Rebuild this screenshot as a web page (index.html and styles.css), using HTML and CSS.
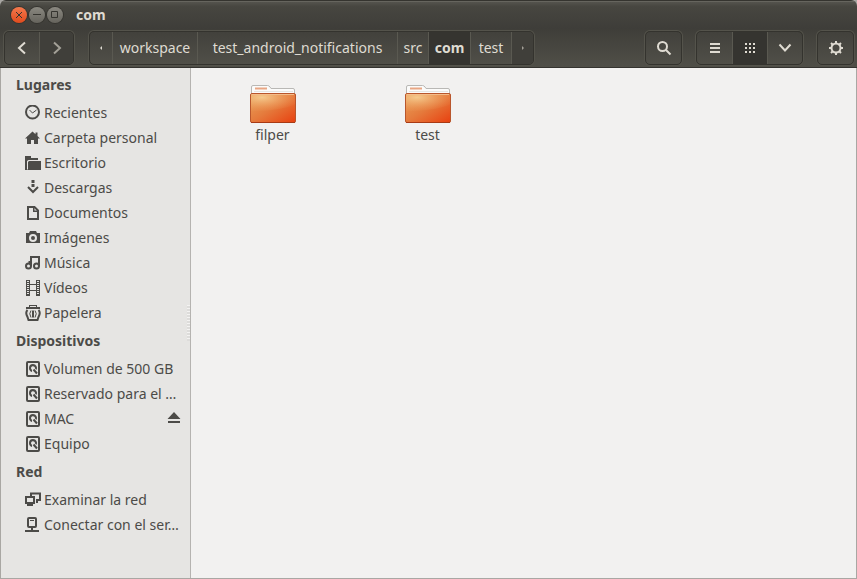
FILE: index.html
```html
<!DOCTYPE html>
<html lang="es">
<head>
<meta charset="utf-8">
<title>com</title>
<link rel="stylesheet" href="styles.css">
</head>
<body>
<svg class="defs" aria-hidden="true">
  <defs>
    <linearGradient id="body" x1="0" y1="0" x2="1" y2="1">
      <stop offset="0" stop-color="#e8a45c"/><stop offset=".5" stop-color="#e57a3c"/><stop offset="1" stop-color="#e8400f"/>
    </linearGradient>
    <radialGradient id="glow" cx=".25" cy=".2" r=".8">
      <stop offset="0" stop-color="#f6cf94" stop-opacity=".9"/><stop offset="1" stop-color="#f0a060" stop-opacity="0.1"/>
    </radialGradient>
    <symbol id="folder" viewBox="0 0 48 40">
      <path d="M2.500 12V3Q2.500 1.500 4 1.500H18.500Q20 1.500 21 3L22 4.500H44Q45.500 4.500 45.500 6V12Z" fill="#fbfbfa" stroke="#b9b8b5"/>
      <path d="M6 4.500H18" stroke="#e9a684" stroke-width="2"/>
      <path d="M5 7.500H44" stroke="#e6e5e2"/>
      <rect x="1.500" y="9.500" width="45" height="29" rx="1.500" fill="url(#body)" stroke="#b9562c"/>
      <path d="M2 10H46V20Q34 27 2 27Z" fill="url(#glow)"/>
      <path d="M3 10.500H45" stroke="#f4bc8a"/>
      <path d="M2 38.500H46" stroke="#a83a14"/>
    </symbol>
    <symbol id="disk" viewBox="0 0 16 16">
      <rect x="2" y="1" width="12" height="14" rx="1" fill="none" stroke="currentColor" stroke-width="2"/>
      <path d="M8 3a4 4 0 0 0-4 4q0 3 3 4V8.500H6.500a2 2 0 1 1 3.500-1L11.500 9A4 4 0 0 0 8 3Z" fill="currentColor"/>
      <path d="M8.500 8.500l3.500 4" stroke="currentColor" stroke-width="2"/>
    </symbol>
  </defs>
</svg>
<div class="window">
  <header class="titlebar">
    <button class="wm close" aria-label="Cerrar"><svg viewBox="0 0 16 16"><path d="M5 5l6 6M11 5l-6 6"/></svg></button>
    <button class="wm" aria-label="Minimizar"><svg viewBox="0 0 16 16"><path d="M4 7.500h8"/></svg></button>
    <button class="wm" aria-label="Maximizar"><svg viewBox="0 0 16 16"><path d="M4.500 4.500h6v6h-6z"/></svg></button>
    <h1>com</h1>
  </header>
  <nav class="toolbar">
    <div class="group history">
      <button class="tool" aria-label="Atrás"><svg viewBox="0 0 16 16"><path d="M11 2.500L5 8l6 5.500"/></svg></button>
      <button class="tool disabled" aria-label="Adelante"><svg viewBox="0 0 16 16"><path d="M5 2.500L11 8l-6 5.500"/></svg></button>
    </div>
    <div class="group path">
      <button class="crumb arrow" aria-label="Anterior"><svg viewBox="0 0 6 6"><path d="M4 1v4L2 3z"/></svg></button>
      <button class="crumb workspace">workspace</button>
      <button class="crumb project">test_android_notifications</button>
      <button class="crumb src">src</button>
      <button class="crumb current">com</button>
      <button class="crumb child">test</button>
      <button class="crumb arrow disabled" aria-label="Siguiente"><svg viewBox="0 0 6 6"><path d="M2 1v4l2-2z"/></svg></button>
    </div>
    <div class="actions">
      <div class="group"><button class="tool" aria-label="Buscar"><svg viewBox="0 0 16 16"><circle cx="6.500" cy="6.500" r="4.500"/><path d="M10 10l4.500 4.500"/></svg></button></div>
      <div class="group">
        <button class="tool" aria-label="Lista"><svg viewBox="0 0 16 16"><path d="M3 4h10M3 8h10M3 12h10"/></svg></button>
        <button class="tool active" aria-label="Iconos"><svg viewBox="0 0 16 16"><path stroke-dasharray="2 2" d="M3 4h10M3 8h10M3 12h10"/></svg></button>
        <button class="tool" aria-label="Opciones de vista"><svg viewBox="0 0 16 16"><path d="M2.500 4.500L8 10.500l5.500-6"/></svg></button>
      </div>
      <div class="group"><button class="tool" aria-label="Preferencias"><svg viewBox="0 0 16 16"><circle cx="8" cy="8" r="4.500"/><path d="M8 1v3M8 12v3M1 8h3M12 8h3M3 3l2.200 2.200M10.800 10.800L13 13M13 3l-2.200 2.200M5.200 10.800L3 13"/></svg></button></div>
    </div>
  </nav>
  <div class="main">
    <aside class="sidebar">
      <h2>Lugares</h2>
      <ul>
        <li><a href="#"><svg viewBox="0 0 16 16"><circle class="line" cx="7.500" cy="7" r="6.500"/><path class="thin" d="M4.500 5l3 3 4-3"/></svg>Recientes</a></li>
        <li><a href="#"><svg viewBox="0 0 16 16"><path d="M7.500 1.500L0 8.500h2V14h4v-4h3v4h4V8.500h2L12.500 6V2.500h-2v1.800z"/></svg>Carpeta personal</a></li>
        <li><a href="#"><svg viewBox="0 0 16 16"><path d="M0 1h6v2h7v2H3.500L2 6v8l1 1H0zM4 6h12v9H3V7z"/></svg>Escritorio</a></li>
        <li><a href="#"><svg viewBox="0 0 16 16"><path d="M6.500 0h3v3h-3zM6.500 4h3v3h-3z"/><path class="line" d="M3 7l5 5 5-5"/></svg>Descargas</a></li>
        <li><a href="#"><svg viewBox="0 0 16 16"><path class="line" d="M3 2h6.500L13 5.500V14H3z"/><path d="M8 1v6h6V5.500H9.500V1z"/></svg>Documentos</a></li>
        <li><a href="#"><svg viewBox="0 0 16 16"><path fill-rule="evenodd" d="M1 3h3l1-2h6l1 2h3v10H1zM8 4a4 4 0 1 0 0 8 4 4 0 0 0 0-8zm0 2a2 2 0 1 1 0 4 2 2 0 0 1 0-4z"/></svg>Imágenes</a></li>
        <li><a href="#"><svg viewBox="0 0 16 16"><path class="line" d="M6 11V2h8v9M6 7H3.500"/><circle class="line" cx="3.500" cy="11" r="2.500"/><circle class="line" cx="11.500" cy="11" r="2.500"/></svg>Música</a></li>
        <li><a href="#"><svg viewBox="0 0 16 16"><path fill-rule="evenodd" d="M1 0h4v4h6V0h4v16h-4v-5H5v5H1zM5 5v5h6V5z"/><path class="holes" d="M3 1v14M13 1v14"/></svg>Vídeos</a></li>
        <li><a href="#"><svg viewBox="0 0 16 16"><path d="M4 0h8v2h3v2H1V2h3zM5 1v1h6V1z" fill-rule="evenodd"/><path class="line" d="M2.500 5Q0 7.500 2.500 12l1 3h9l1-3Q16 7.500 13.500 5"/><path class="thin" d="M6 5.500q-2.500 3 0 7M10 5.500q2.500 3 0 7M7.500 5.500v7M8.500 5.500v7"/></svg>Papelera</a></li>
      </ul>
      <h2>Dispositivos</h2>
      <ul>
        <li><a href="#"><svg><use href="#disk"/></svg>Volumen de 500 GB</a></li>
        <li><a href="#"><svg><use href="#disk"/></svg>Reservado para el …</a></li>
        <li><a href="#"><svg><use href="#disk"/></svg>MAC</a><button class="eject" aria-label="Expulsar"><svg viewBox="0 0 16 16"><path d="M8 1l6.500 7h-13zM2 10h12v2H2z"/></svg></button></li>
        <li><a href="#"><svg><use href="#disk"/></svg>Equipo</a></li>
      </ul>
      <h2>Red</h2>
      <ul>
        <li><a href="#"><svg viewBox="0 0 16 16"><path class="line" d="M1 5h8v6H1zM6 4V1.500h9V8h-4"/><path d="M2 12h6v2H2zM11 9h2v2h-2z"/></svg>Examinar la red</a></li>
        <li><a href="#"><svg viewBox="0 0 16 16"><rect class="line" x="3" y="1" width="8" height="9" rx="1"/><path d="M5 3h4v1H5zM6 10h2v3h6v2H0v-2h6z"/></svg>Conectar con el ser…</a></li>
      </ul>
    </aside>
    <section class="files">
      <a class="file" href="#"><svg><use href="#folder"/></svg><span>filper</span></a>
      <a class="file" href="#"><svg><use href="#folder"/></svg><span>test</span></a>
    </section>
  </div>
</div>
</body>
</html>
```
FILE: styles.css
```css
* { box-sizing: border-box; }
body {
  margin: 0;
  background: #a9a7a3;
  color: #4c4b48;
  font: 14px/20px "Noto Sans", "Open Sans", sans-serif;
}
.defs { position: absolute; width: 0; height: 0; }
button { margin: 0; padding: 0; border: 0; background: none; color: inherit; font: inherit; }
a { color: inherit; text-decoration: none; }
.window {
  display: flex;
  flex-direction: column;
  min-height: 100vh;
  border-radius: 6px 6px 0 0;
  overflow: hidden;
}
.titlebar {
  display: flex;
  align-items: center;
  gap: 2px;
  height: 29px;
  padding: 0 11px;
  border-top: 1px solid #35342f;
  background: linear-gradient(#575650, #474640 20%, #3e3d39);
  box-shadow: inset 0 1px #66655e;
}
.wm {
  flex: none;
  width: 16px;
  height: 16px;
  border-radius: 50%;
  background: linear-gradient(#8a8880, #66645d);
  box-shadow: 0 0 0 1px #35342f;
}
.wm.close { background: linear-gradient(#f4794d, #e14b1d); }
.wm svg { display: block; width: 16px; height: 16px; fill: none; stroke: #35342f; stroke-width: 1; }
h1 { margin: 0 0 0 11px; color: #dfdbd2; font-size: 14px; line-height: 20px; }
.toolbar {
  display: flex;
  align-items: center;
  gap: 15px;
  height: 39px;
  padding: 0 3px 0 4px;
  border-bottom: 1px solid #34332f;
  background: linear-gradient(#3f3e39, #504f48);
  color: #dfdbd2;
}
.group {
  display: flex;
  height: 34px;
  border: 1px solid #34332e;
  border-radius: 5px;
  overflow: hidden;
  background: linear-gradient(#42413c, #504f48);
  box-shadow: 0 0 0 1px #54534b;
}
.actions { display: flex; gap: 14px; margin-left: auto; }
.tool { display: grid; place-items: center; width: 35px; }
.history .tool { width: 34px; }
.tool svg { width: 16px; height: 16px; fill: none; stroke: currentColor; stroke-width: 2; }
.tool + .tool, .crumb + .crumb { border-left: 1px solid #5a5951; }
.disabled { background: #403f3a; color: #a3a097; }
.active, .current { background: #353430; }
.crumb { text-align: center; white-space: nowrap; }
.crumb.arrow { display: grid; place-items: center; width: 22px; }
.crumb.arrow svg { width: 6px; height: 6px; fill: currentColor; }
.workspace { width: 85px; }
.project { width: 200px; }
.src { width: 31px; }
.current { width: 42px; font-weight: bold; }
.child { width: 41px; }
.main { display: flex; flex: 1; border: 1px solid #a9a7a3; border-top: 0; }
.sidebar {
  position: relative;
  width: 190px;
  flex: none;
  padding-top: 1px;
  border-right: 1px solid #b5b3b0;
  background: #e6e5e3;
}
.sidebar::after {
  content: "";
  position: absolute;
  top: calc(50% - 18px);
  right: 0;
  width: 3px;
  height: 36px;
  background: repeating-linear-gradient(#f4f3f2 0 1px, #dddcda 1px 3px);
}
h2 { margin: 0; padding: 6px 15px 5px; font-size: 14px; line-height: 20px; }
ul { margin: 0; padding: 0; list-style: none; }
li { display: flex; align-items: center; height: 25px; padding: 0 8px 0 24px; }
li a { display: flex; align-items: center; gap: 3px; flex: 1; white-space: nowrap; }
li svg { display: block; flex: none; width: 16px; height: 16px; fill: currentColor; }
li svg .line { fill: none; stroke: currentColor; stroke-width: 2; }
li svg .thin { fill: none; stroke: currentColor; stroke-width: 1; }
li svg .holes { fill: none; stroke: #e6e5e3; stroke-width: 2; stroke-dasharray: 1 1; }
.files {
  display: grid;
  grid-template-columns: repeat(auto-fill, 155px);
  align-content: start;
  flex: 1;
  padding: 16px 4px;
  background: #f2f1f0;
}
.file { display: flex; flex-direction: column; align-items: center; gap: 1px; }
.file svg { width: 48px; height: 40px; }
```
